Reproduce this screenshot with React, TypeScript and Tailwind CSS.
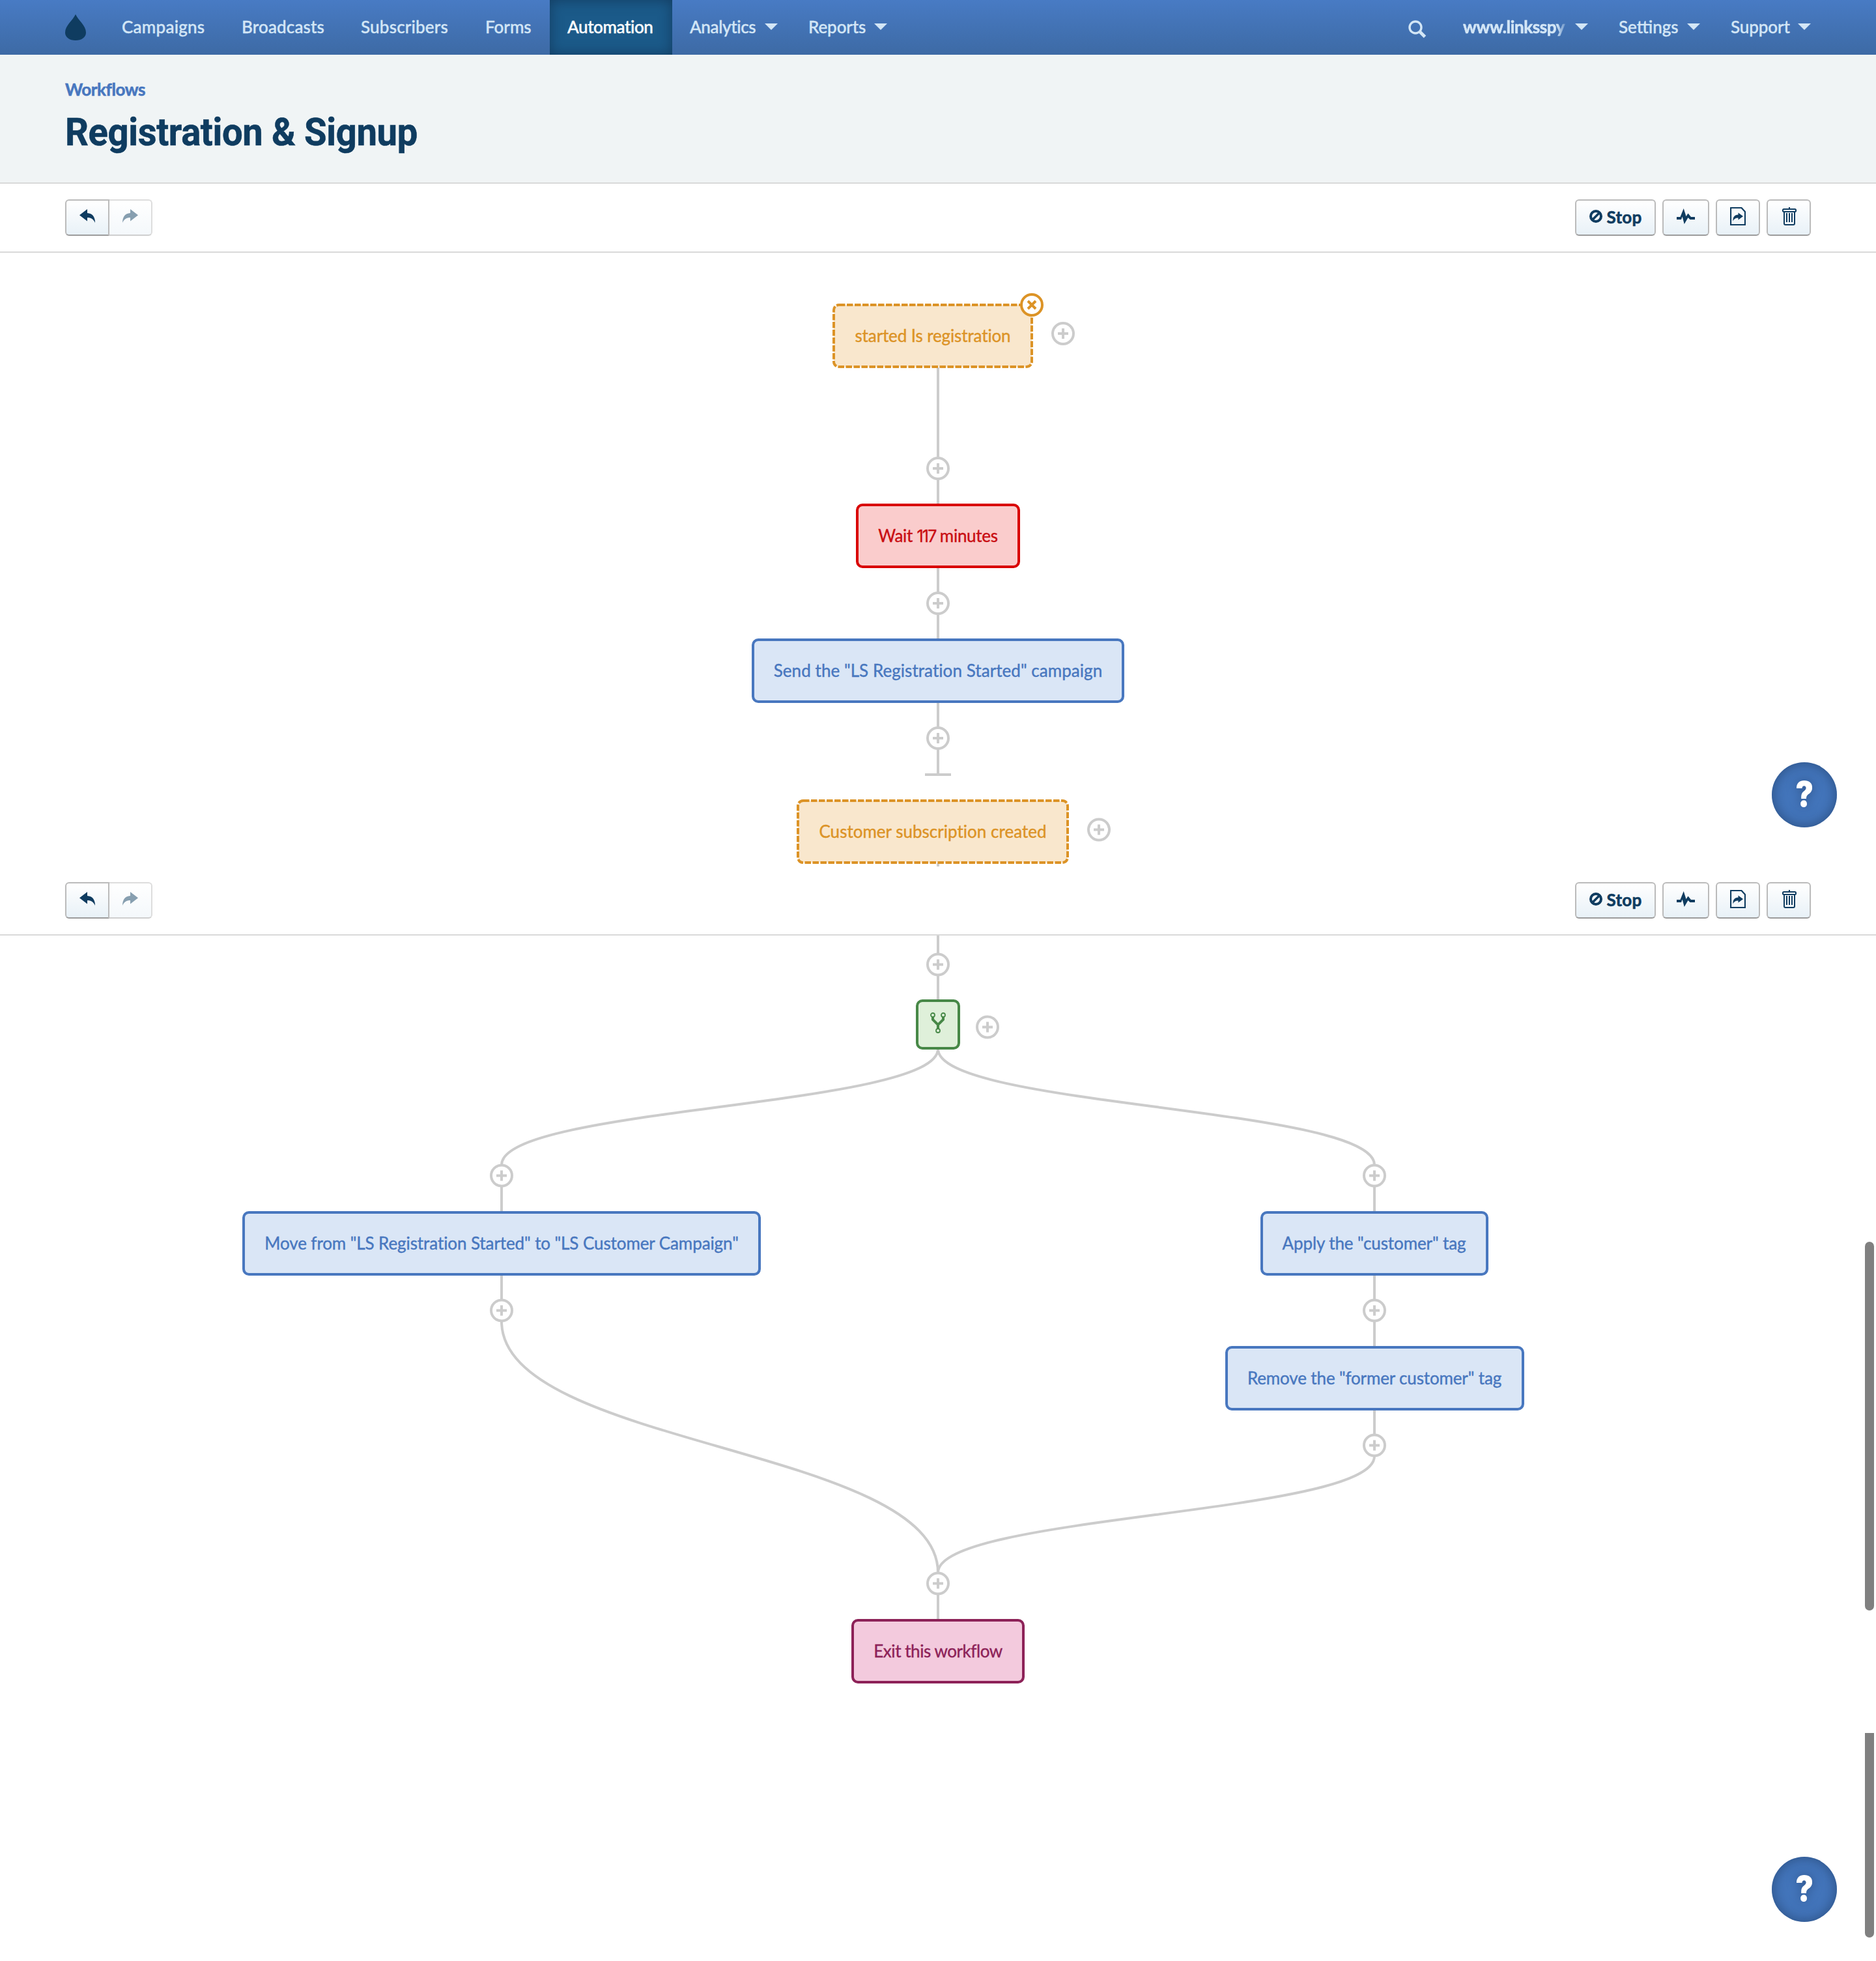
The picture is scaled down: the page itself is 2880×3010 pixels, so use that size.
import React from 'react';

const NAV_LEFT = [
  { label: 'Campaigns', size: 'w-[184px] tracking-[0.25px]' },
  { label: 'Broadcasts', size: 'w-[183px] tracking-[0.15px]' },
  { label: 'Subscribers', size: 'w-[191px] tracking-[0.2px]' },
  { label: 'Forms', size: 'w-[126px] tracking-[0px]' },
  { label: 'Automation', size: 'w-[188px] tracking-[-0.4px]', active: true },
  { label: 'Analytics', size: 'w-[182px] tracking-[-0.35px]', menu: true },
  { label: 'Reports', size: 'w-[168px] tracking-[-0.1px]', menu: true },
];

function Caret() {
  return (
    <svg className="ml-auto mt-[-2px] h-[10px] w-5 shrink-0" viewBox="0 0 20 10">
      <path d="M0 0h20L10 10z" fill="#d3e6f6" />
    </svg>
  );
}

function NavItem({ label, size, active, menu }: { label: string; size: string; active?: boolean; menu?: boolean }) {
  return (
    <div
      className={
        'flex h-full items-center whitespace-nowrap pl-[27px] font-medium [-webkit-text-stroke:0.4px] ' +
        size +
        (menu ? ' pr-5 ' : ' ') +
        (active ? 'bg-[#1b5a89] text-white shadow-[inset_0_0_20px_rgba(15,45,75,0.65)]' : 'text-[#d3e6f6]')
      }
    >
      <span className="mt-[-2px]">{label}</span>
      {menu && <Caret />}
    </div>
  );
}

function Header() {
  return (
    <header className="flex h-[84px] items-center justify-between bg-linear-to-b from-[#487bc4] to-[#3d6aa5] pl-[100px] pr-[80px] text-[26px] leading-[84px]">
      <div className="flex h-full items-center">
        <svg className="mr-7 h-10 w-8" viewBox="0 0 32 40">
          <path d="M16 0C20 9 32 17 32 28C32 35.5 25 40 16 40S0 35.5 0 28C0 17 12 9 16 0z" fill="#0f3c60" />
        </svg>
        {NAV_LEFT.map((item) => (
          <NavItem key={item.label} {...item} />
        ))}
      </div>
      <div className="flex h-full items-center">
        <svg className="mr-7 mt-[5px] h-7 w-7" viewBox="0 0 28 28" fill="none" stroke="#d3e6f6">
          <circle cx="11" cy="11" r="9" strokeWidth="3.4" />
          <path d="M17.5 17.5L25.5 25.5" strokeWidth="5" />
        </svg>
        <div className="flex h-full w-[240px] items-center pl-7 pr-5 text-[#d3e6f6]">
          <span className="mt-[-2px] w-[160px] overflow-hidden whitespace-nowrap font-bold tracking-[-0.4px] [-webkit-text-stroke:0.6px] [mask-image:linear-gradient(to_right,black_144px,transparent_162px)]">
            www.linksspy
          </span>
          <Caret />
        </div>
        <NavItem label="Settings" size="w-[172px] tracking-[0px]" menu />
        <NavItem label="Support" size="w-[170px] tracking-[-0.1px]" menu />
      </div>
    </header>
  );
}

const BTN =
  'flex h-14 items-center justify-center rounded-md border-2 border-[#bbbbbb] border-b-[#9c9c9c] bg-linear-to-b from-white to-[#e8f1f7] text-[#0f3c60]';

function UndoArrow() {
  return (
    <svg className="mt-[-6px] h-[21px] w-6" viewBox="0 0 24 21">
      <path d="M12 0V6C20 6.500 24 12 24 21C21.500 15.500 18 13 12 13V18.500L0 9.300z" fill="currentColor" />
    </svg>
  );
}

function Toolbar() {
  return (
    <div className="flex h-[106px] items-center justify-between border-b-2 border-[#d9d9d9] bg-white px-[100px]">
      <div className="flex">
        <button className={BTN + ' w-[68px] rounded-r-none'}>
          <UndoArrow />
        </button>
        <button className="flex h-14 w-[66px] items-center justify-center rounded-r-md border-2 border-l-0 border-[#dddddd] border-b-[#cfcfcf] bg-linear-to-b from-white to-[#f4f8fb] text-[#879fb0]">
          <span className="-scale-x-100">
            <UndoArrow />
          </span>
        </button>
      </div>
      <div className="flex gap-[10px]">
        <button className={BTN + ' w-[124px]'}>
          <svg className="mr-[7px] mt-[-4px] h-5 w-5" viewBox="0 0 20 20" fill="none" stroke="currentColor">
            <circle cx="10" cy="10" r="8" strokeWidth="4" />
            <path d="M5 15L15 5" strokeWidth="3.500" />
          </svg>
          <span className="mt-[-2px] text-[26px] font-bold tracking-[0.2px] [-webkit-text-stroke:0.6px]">Stop</span>
        </button>
        <button className={BTN + ' w-[72px]'}>
          <svg className="mt-[-5px] h-6 w-7" viewBox="0 0 28 24">
            <path d="M0 13H5.500L10.700 0L14.500 12L17.500 7.500L22 13H28V17H20.500L17.500 14L11.700 24L8.700 12.500L7 17H0z" fill="currentColor" />
          </svg>
        </button>
        <button className={BTN + ' w-[68px]'}>
          <svg className="mt-[-4px] h-7 w-6" viewBox="0 0 24 28">
            <path d="M1 1H17.500L23 7V27H1z" fill="none" stroke="currentColor" strokeWidth="2.200" />
            <path d="M12.500 8.500L20 14L12.500 19.500V16.500C8 16.500 6 18 4.500 21.500C4 15 7 11.800 12.500 11.500z" fill="currentColor" />
          </svg>
        </button>
        <button className={BTN + ' w-[68px]'}>
          <svg className="ml-[2px] mt-[-4px] h-7 w-[22px]" viewBox="0 0 22 28" fill="none" stroke="currentColor" strokeWidth="2">
            <path d="M11 0V3" />
            <rect x="1" y="3" width="20" height="4" rx="1.500" />
            <path d="M3 7V25Q3 27 5 27H17Q19 27 19 25V7M7 9V23M11 9V23M15 9V23" />
          </svg>
        </button>
      </div>
    </div>
  );
}

type Kind = 'trigger' | 'delay' | 'action' | 'exit';

const KIND: Record<Kind, string> = {
  trigger: 'text-[#dc9326]',
  delay: 'border-4 border-[#d90000] bg-[#facccc] text-[#c90d12]',
  action: 'border-4 border-[#4877bf] bg-[#dae6f6] text-[#4877bf]',
  exit: 'border-4 border-[#8d2258] bg-[#f3cadd] text-[#8d2258]',
};

function FlowNode({ x, y, w, kind, tracking, children }: { x: number; y: number; w: number; kind: Kind; tracking: string; children: React.ReactNode }) {
  return (
    <div
      className={'absolute flex h-[99px] items-center justify-center whitespace-nowrap rounded-[10px] text-[26px] [-webkit-text-stroke:0.4px] ' + KIND[kind]}
      style={{ left: x, top: y, width: w }}
    >
      {kind === 'trigger' && (
        <svg className="absolute inset-0 h-full w-full">
          <rect x="2" y="2" width={w - 4} height="95" rx="8" fill="#f9e7cd" stroke="#dc9326" strokeWidth="4" strokeDasharray="9.500 2.500" />
        </svg>
      )}
      <span className={'relative ' + tracking}>{children}</span>
    </div>
  );
}

function Plus({ x, y }: { x: number; y: number }) {
  return (
    <g transform={`translate(${x} ${y})`} stroke="#cccccc" strokeWidth="4">
      <circle r="16" fill="#ffffff" />
      <path d="M-8 0H8M0 -8V8" />
    </g>
  );
}

function Help({ y }: { y: number }) {
  return (
    <div
      className="absolute left-[2720px] flex h-[100px] w-[100px] items-center justify-center rounded-full bg-[#4375bb] font-['Inter',sans-serif] text-[54px] font-black leading-none text-white shadow-[inset_0_0_20px_rgba(25,50,85,0.6)] [text-shadow:0_0_16px_rgba(25,50,85,0.5)]"
      style={{ top: y }}
    >
      <span className="mt-[-2px] scale-x-[0.86]">?</span>
    </div>
  );
}

export default function App() {
  return (
    <div className="h-[3010px] w-[2880px] overflow-hidden bg-white font-['Lato',sans-serif]">
      <Header />
      <div className="flex h-[198px] flex-col border-b-2 border-[#d9d9d9] bg-[#f0f4f5] pl-[100px] pt-[37px]">
        <span className="text-[26px] font-bold leading-[32px] tracking-[-0.44px] text-[#4877bf] [-webkit-text-stroke:0.6px]">Workflows</span>
        <h1 className="mt-[15px] origin-left scale-x-[0.936] whitespace-nowrap font-['Roboto',sans-serif] text-[60px] font-bold leading-[70px] tracking-[-0.4px] text-[#0f3c60] [-webkit-text-stroke:0.6px]">
          Registration &amp; Signup
        </h1>
      </div>
      <Toolbar />

      <section className="relative h-[942px] overflow-hidden">
        <svg className="absolute inset-0 h-full w-full" viewBox="0 388 2880 942">
          <path d="M1440 564V774M1440 871V981M1440 1078V1189M1420 1189H1460M1440 1325V1330" stroke="#cccccc" strokeWidth="4" fill="none" />
          <Plus x={1440} y={719} />
          <Plus x={1440} y={926} />
          <Plus x={1440} y={1133} />
          <Plus x={1632} y={512} />
          <Plus x={1687} y={1273.5} />
        </svg>
        <FlowNode x={1278} y={78} w={308} kind="trigger" tracking="tracking-[-0.12px]">started Is registration</FlowNode>
        <FlowNode x={1314} y={385} w={252} kind="delay" tracking="tracking-[-0.3px]">
          Wait <span className="font-['Inter',sans-serif] text-[25px] tracking-[-1.8px]">117</span> minutes
        </FlowNode>
        <FlowNode x={1154} y={592} w={572} kind="action" tracking="tracking-[0.06px]">Send the "LS Registration Started" campaign</FlowNode>
        <FlowNode x={1223} y={839} w={418} kind="trigger" tracking="tracking-[0.02px]">Customer subscription created</FlowNode>
        <svg className="absolute left-[1566px] top-[62px] h-9 w-9" viewBox="0 0 36 36" stroke="#dc9326" strokeWidth="4">
          <circle cx="18" cy="18" r="16" fill="#ffffff" />
          <path d="M12 12L24 24M24 12L12 24" />
        </svg>
        <Help y={782} />
      </section>

      <Toolbar />

      <section className="relative h-[1574px] overflow-hidden">
        <svg className="absolute inset-0 h-full w-full" viewBox="0 1436 2880 1574">
          <g stroke="#cccccc" strokeWidth="4" fill="none">
            <path d="M1440 1436V1535M770 1804V1860M770 1957V2011M2110 1804V1860M2110 1957V2067M2110 2164V2220M1440 2431V2486" />
            <path d="M1440 1610C1440 1699 770 1699 770 1788" />
            <path d="M1440 1610C1440 1699 2110 1699 2110 1788" />
            <path d="M770 2028C770 2221 1440 2221 1440 2414" />
            <path d="M2110 2235C2110 2325 1440 2325 1440 2414" />
          </g>
          <Plus x={1440} y={1480.5} />
          <Plus x={1516} y={1576.5} />
          <Plus x={770} y={1804.5} />
          <Plus x={2110} y={1804.5} />
          <Plus x={770} y={2011.5} />
          <Plus x={2110} y={2011.5} />
          <Plus x={2110} y={2218.5} />
          <Plus x={1440} y={2430.5} />
        </svg>
        <div className="absolute left-[1406px] top-[98px] h-[77px] w-[68px] rounded-[10px] border-4 border-[#478847] bg-[#dff0da]">
          <svg className="ml-[18px] mt-[16px] h-8 w-6" viewBox="0 0 24 32" fill="none" stroke="#478847">
            <path d="M4 7V11L12 19L20 11V7M12 18V26" strokeWidth="4" />
            <g strokeWidth="1.800" fill="#dff0da">
              <circle cx="4" cy="4" r="3" />
              <circle cx="20" cy="4" r="3" />
              <circle cx="12" cy="28" r="3" />
            </g>
          </svg>
        </div>
        <FlowNode x={372} y={423} w={796} kind="action" tracking="tracking-[-0.09px]">Move from "LS Registration Started" to "LS Customer Campaign"</FlowNode>
        <FlowNode x={1934.5} y={423} w={350} kind="action" tracking="tracking-[-0.1px]">Apply the "customer" tag</FlowNode>
        <FlowNode x={1880.5} y={630} w={459} kind="action" tracking="tracking-[-0.14px]">Remove the "former customer" tag</FlowNode>
        <FlowNode x={1307} y={1049} w={266} kind="exit" tracking="tracking-[-0.45px]">Exit this workflow</FlowNode>
        <Help y={1414} />
        <div className="absolute left-[2863px] top-[470px] h-[566px] w-[14px] rounded-full bg-[#808080]" />
        <div className="absolute left-[2863px] top-[1224px] h-[314px] w-[14px] rounded-b-full bg-[#808080]" />
      </section>
    </div>
  );
}
